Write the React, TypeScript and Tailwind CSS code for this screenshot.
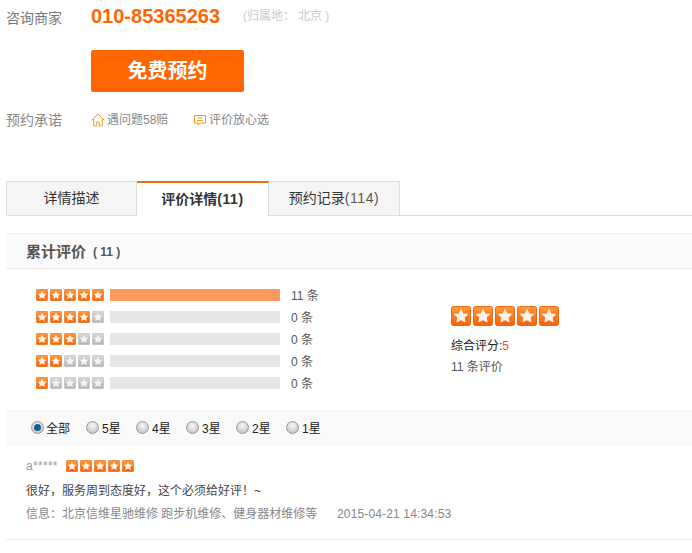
import { useId } from 'react'

function Star({ on = true, size = 12 }: { on?: boolean; size?: number }) {
  const id = useId()
  return (
    <svg width={size} height={size} viewBox="0 0 20 20" className="block shrink-0">
      <defs>
        <linearGradient id={id} x1="0" y1="0" x2="0" y2="1">
          <stop offset="0" stopColor={on ? '#ff9a3c' : '#d8d8d8'} />
          <stop offset="1" stopColor={on ? '#f4600c' : '#b4b4b4'} />
        </linearGradient>
      </defs>
      <rect x="0.5" y="0.5" width="19" height="19" rx="2" fill={`url(#${id})`} stroke={on ? '#ee6a12' : '#bdbdbd'} />
      <path d="M10 2.800l2.300 4.600 5 .7-3.600 3.500.9 5-4.600-2.400-4.600 2.400.9-5-3.600-3.500 5-.7z" fill={on ? '#fff3e6' : '#f4f4f4'} />
    </svg>
  )
}

function Stars({ n, size = 12 }: { n: number; size?: number }) {
  return (
    <div className="flex gap-[2px]">
      {[1, 2, 3, 4, 5].map((i) => <Star key={i} on={i <= n} size={size} />)}
    </div>
  )
}

function Radio({ on, label, wide }: { on?: boolean; label: string; wide?: boolean }) {
  return (
    <div className={wide ? 'flex items-center w-[55px] shrink-0' : 'flex items-center w-[50px] shrink-0'}>
      <span className="w-[13px] h-[13px] rounded-full border border-[#9a9a9a] bg-[radial-gradient(circle_at_50%_35%,#f8f8f8,#b8b8b8)] flex items-center justify-center shrink-0">
        {on && <span className="w-[7px] h-[7px] rounded-full bg-[#0f5f96]" />}
      </span>
      <span className={wide ? 'ml-[2px] mt-[2px] text-[12px] text-[#222]' : 'ml-[3px] mt-[2px] text-[12px] text-[#222]'}>{label}</span>
    </div>
  )
}

const rows = [
  { n: 5, count: '11', full: true },
  { n: 4, count: '0' },
  { n: 3, count: '0' },
  { n: 2, count: '0' },
  { n: 1, count: '0' },
]

export default function App() {
  return (
    <div className="w-[692px] h-[553px] overflow-hidden bg-white font-['Liberation_Sans','Noto_Sans_CJK_SC',sans-serif]">
      <div className="flex items-center h-[32px] pl-[6px]">
        <span className="w-[85px] text-[14px] text-[#777] mt-[4px]">咨询商家</span>
        <span className="w-[152px] text-[20px] font-bold text-[#ff6600]">010-85365263</span>
        <span className="text-[12px] text-[#ccc]">(归属地：<span className="ml-[3px]">北京 )</span></span>
      </div>
      <button className="block ml-[91px] mt-[18px] w-[153px] h-[42px] rounded-[2px] bg-[#ff6600] text-white text-[20px] font-bold">免费预约</button>
      <div className="flex items-center h-[20px] mt-[18px] pl-[6px] text-[#888]">
        <span className="w-[85px] text-[14px]">预约承诺</span>
        <svg width="14" height="14" viewBox="0 0 14 14" fill="none" stroke="#f59a23" className="block">
          <path d="M.7 7.200L7 1l6.300 6.200M2.700 6v7h3V9h2.600v4h3V6" />
        </svg>
        <span className="text-[12px] ml-[2px] w-[87px]">遇问题58赔</span>
        <svg width="12" height="12" viewBox="0 0 12 12" fill="none" stroke="#f59a23" className="block">
          <path d="M.5 1.500h11v7.500H6l-2 2V9H.5zM3 4h6M3 6.500h6" />
        </svg>
        <span className="text-[12px] ml-[3px]">评价放心选</span>
      </div>

      <div className="flex mt-[51px] ml-[6px] h-[35px] border-b border-[#ddd]">
        <div className="w-[131px] h-[35px] flex items-center justify-center bg-[#f5f5f5] border border-[#ddd] text-[14px] text-[#333]">详情描述</div>
        <div className="w-[132px] h-[35px] flex items-center justify-center bg-white border-t-2 border-t-[#e8760a] border-r border-r-[#ddd] text-[14px] font-bold text-[#333]">评价详情<span className="tracking-[0.6px]">(11)</span></div>
        <div className="w-[131px] h-[35px] flex items-center justify-center bg-[#f5f5f5] border border-l-0 border-[#ddd] text-[14px] text-[#333]">预约记录<span className="text-[#555] tracking-[0.6px]">(114)</span></div>
      </div>

      <div className="flex items-center mt-[17px] ml-[6px] h-[36px] pl-[20px] pt-[2px] bg-[#fafafa] border-y border-[#eee] text-[15px] font-bold text-[#555]">
        累计评价<span className="text-[12px] ml-[7px]">( 11 )</span>
      </div>

      <div className="flex ml-[36px] mt-[19px] h-[110px]">
        <div className="flex flex-col gap-[8px] w-[415px]">
          {rows.map((r) => (
            <div key={r.n} className="flex items-center h-[14px]">
              <Stars n={r.n} />
              <div className={r.full ? 'ml-[6px] w-[170px] h-[12px] bg-[#ff9a5e]' : 'ml-[6px] w-[170px] h-[12px] bg-[#e5e5e5]'} />
              <span className="ml-[11px] mt-[2px] text-[12px] text-[#555]">{r.count} 条</span>
            </div>
          ))}
        </div>
        <div className="mt-[18px]">
          <Stars n={5} size={20} />
          <div className="mt-[12px] text-[12px] text-[#222] leading-[16px]">综合评分:<span className="text-[#f04c12]">5</span></div>
          <div className="mt-[5px] text-[12px] text-[#555] leading-[16px]">11 条评价</div>
        </div>
      </div>

      <div className="flex items-center mt-[11px] ml-[6px] h-[37px] pl-[25px] bg-[#f9f9f9]">
        <Radio on wide label="全部" />
        <Radio label="5星" />
        <Radio label="4星" />
        <Radio label="3星" />
        <Radio label="2星" />
        <Radio label="1星" />
      </div>

      <div className="ml-[6px] pl-[20px] mt-[12px] h-[82px] border-b border-[#eee]">
        <div className="flex items-center h-[16px] text-[12px] text-[#999]">
          <span className="w-[40px] tracking-[0.3px]">a*****</span>
          <Stars n={5} />
        </div>
        <div className="mt-[8px] text-[12px] leading-[18px] text-[#444]">很好，服务周到态度好，这个必须给好评！~</div>
        <div className="flex mt-[5px] text-[12px] leading-[18px] text-[#888]">
          <span className="w-[311px]">信息：北京信维星驰维修 跑步机维修、健身器材维修等</span>
          <span className="tracking-[0.15px]">2015-04-21 14:34:53</span>
        </div>
      </div>
    </div>
  )
}
